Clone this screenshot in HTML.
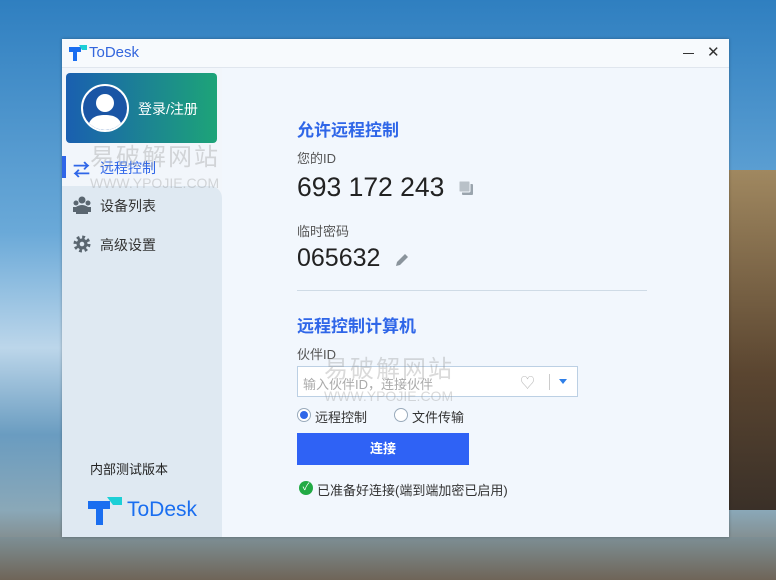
<html><head><style>
*{margin:0;padding:0;box-sizing:border-box}
body{width:776px;height:580px;overflow:hidden;position:relative;font-family:"Liberation Sans","Noto Sans CJK SC",sans-serif;background:linear-gradient(180deg,#2f7fc0 0%,#6aa9d8 40%,#bcd6ea 60%,#6a9cc0 75%,#8aa8b8 88%,#7a6a58 100%)}
.rock{position:absolute;left:729px;top:170px;width:47px;height:340px;background:linear-gradient(180deg,#a08860,#5a4530 60%,#3a3028)}
.sand{position:absolute;left:0;top:537px;width:776px;height:43px;background:linear-gradient(180deg,#7d8f95,#6f6558)}
.win{position:absolute;left:62px;top:39px;width:667px;height:498px;background:#f2f7fd;box-shadow:0 0 3px rgba(0,0,0,.3)}
.title{height:29px;border-bottom:1px solid #e0e6ee;background:#f7fafd;position:relative}
.title .t{position:absolute;left:27px;top:5px;font-size:15px;color:#3366dd}
.side{position:absolute;left:0;top:29px;width:160px;height:469px;background:#f2f6fb}
.side .lower{position:absolute;left:0;top:118px;width:160px;height:351px;background:#dfe9f2;border-top-right-radius:12px}
.card{position:absolute;left:4px;top:5px;width:151px;height:70px;border-radius:4px;background:linear-gradient(90deg,#1a5fb0,#1da478)}
.av{position:absolute;left:15px;top:11px;width:48px;height:48px;border-radius:50%;border:2px solid #fff;background:#1a55a5;overflow:hidden}
.nav{position:absolute;left:38px;font-size:14px;color:#333}
.main{position:absolute;left:235px}
h2{font-size:17px;color:#2f66e8;font-weight:bold}
.wm{position:absolute;color:rgba(150,150,150,.35);font-size:24px;letter-spacing:2px;white-space:nowrap}
.wm2{position:absolute;color:rgba(150,150,150,.35);font-size:14px;white-space:nowrap}
</style></head><body>
<div class="rock"></div><div class="sand"></div>
<div class="win">
 <div class="title">
  <svg style="position:absolute;left:7px;top:6px" width="18" height="16"><path d="M0 2h12v5H8v9H4V7H0z" fill="#1a6ef0"/><path d="M10 0h8v5h-5z" fill="#1ccfd6"/></svg>
  <span class="t">ToDesk</span>
  <div style="position:absolute;left:621px;top:14px;width:11px;height:1px;background:#333"></div>
  <div style="position:absolute;left:645px;top:4px;font-size:15px;color:#333">✕</div>
 </div>
 <div class="side">
  <div class="lower"></div>
  <div class="card"><div class="av"><svg width="44" height="44"><circle cx="22" cy="17" r="9" fill="#fff"/><path d="M4 44c2-12 8-15 18-15s16 3 18 15z" fill="#fff"/></svg></div>
   <span style="position:absolute;left:72px;top:26px;color:#fff;font-size:14px">登录/注册</span></div>
  <div style="position:absolute;left:0;top:88px;width:4px;height:22px;background:#2f66e8"></div>
  <span style="position:absolute;left:11px;top:88px;color:#2f66e8;font-size:17px;font-weight:bold">⇄</span>
  <span class="nav" style="top:90px;color:#2f66e8">远程控制</span>
  <svg style="position:absolute;left:11px;top:128px" width="18" height="18"><circle cx="9" cy="4" r="3.5" fill="#5a6670"/><circle cx="3" cy="7" r="2.5" fill="#5a6670"/><circle cx="15" cy="7" r="2.5" fill="#5a6670"/><path d="M3 18v-7q6-4 12 0v7z" fill="#5a6670"/><path d="M0 16v-5h3v5zM15 16v-5h3v5z" fill="#5a6670"/></svg>
  <span class="nav" style="top:128px">设备列表</span>
  <svg style="position:absolute;left:11px;top:167px" width="18" height="18" viewBox="0 0 18 18"><circle cx="9" cy="9" r="6.5" fill="none" stroke="#5a6670" stroke-width="4" stroke-dasharray="2.6 2.5"/><circle cx="9" cy="9" r="5.5" fill="#5a6670"/><circle cx="9" cy="9" r="2.3" fill="#dfe9f2"/></svg>
  <span class="nav" style="top:167px">高级设置</span>
  <span style="position:absolute;left:28px;top:391px;font-size:13px;color:#222">内部测试版本</span>
  <svg style="position:absolute;left:26px;top:429px" width="34" height="28"><path d="M0 4h22v8h-7v16H8V12H0z" fill="#1a6ef0"/><path d="M19 0h15v8h-9z" fill="#1ccfd6"/></svg>
  <span style="position:absolute;left:65px;top:430px;font-size:21px;color:#1a6ef0">ToDesk</span>
 </div>
 <div class="wm" style="left:28px;top:98px">易破解网站</div>
 <div class="wm2" style="left:28px;top:136px">WWW.YPOJIE.COM</div>
 <div class="main" style="top:77px"><h2>允许远程控制</h2></div>
 <div class="main" style="top:109px;font-size:13px;color:#555">您的ID</div>
 <div class="main" style="top:133px;font-size:26.5px;color:#222">693 172 243</div>
 <svg style="position:absolute;left:396px;top:141px" width="16" height="16"><rect x="4" y="4" width="11" height="11" rx="1" fill="#9aa4ad"/><rect x="1" y="1" width="11" height="11" rx="1" fill="#b9c1c8" stroke="#f2f7fd"/></svg>
 <div class="main" style="top:182px;font-size:13px;color:#555">临时密码</div>
 <div class="main" style="top:205px;font-size:25px;color:#222">065632</div>
 <svg style="position:absolute;left:332px;top:213px" width="16" height="16"><path d="M2 14l1-4 8-8 3 3-8 8z" fill="#8a949c"/></svg>
 <div style="position:absolute;left:235px;top:251px;width:350px;height:1px;background:#cfdbe6"></div>
 <div class="main" style="top:273px"><h2>远程控制计算机</h2></div>
 <div class="main" style="top:305px;font-size:13px;color:#555">伙伴ID</div>
 <div style="position:absolute;left:235px;top:327px;width:281px;height:31px;background:#fff;border:1px solid #bcd0e4">
  <span style="position:absolute;left:5px;top:7px;font-size:13px;color:#aaa">输入伙伴ID，连接伙伴</span>
  <span style="position:absolute;left:222px;top:5px;font-size:15px;color:#bbb">♡</span>
  <div style="position:absolute;left:251px;top:7px;width:1px;height:16px;background:#ccc"></div>
  <div style="position:absolute;left:261px;top:12px;border:4px solid transparent;border-top:5px solid #2f7fe8"></div>
 </div>
 <div class="wm" style="left:262px;top:310px">易破解网站</div>
 <div class="wm2" style="left:262px;top:349px">WWW.YPOJIE.COM</div>
 <div style="position:absolute;left:235px;top:369px;width:14px;height:14px;border-radius:50%;border:1px solid #9ab;background:#fff"><div style="margin:2px;width:8px;height:8px;border-radius:50%;background:#2f66e8"></div></div>
 <span style="position:absolute;left:253px;top:368px;font-size:13px;color:#333">远程控制</span>
 <div style="position:absolute;left:332px;top:369px;width:14px;height:14px;border-radius:50%;border:1px solid #9ab;background:#fff"></div>
 <span style="position:absolute;left:350px;top:368px;font-size:13px;color:#333">文件传输</span>
 <div style="position:absolute;left:235px;top:394px;width:172px;height:32px;background:#2f62f5;color:#fff;font-size:13px;font-weight:bold;text-align:center;line-height:32px">连接</div>
 <div style="position:absolute;left:237px;top:442px;width:14px;height:14px;border-radius:50%;background:#22aa44;color:#fff;font-size:10px;text-align:center;line-height:14px">✓</div>
 <span style="position:absolute;left:255px;top:441px;font-size:13px;color:#333">已准备好连接(端到端加密已启用)</span>
</div>
</body></html>
